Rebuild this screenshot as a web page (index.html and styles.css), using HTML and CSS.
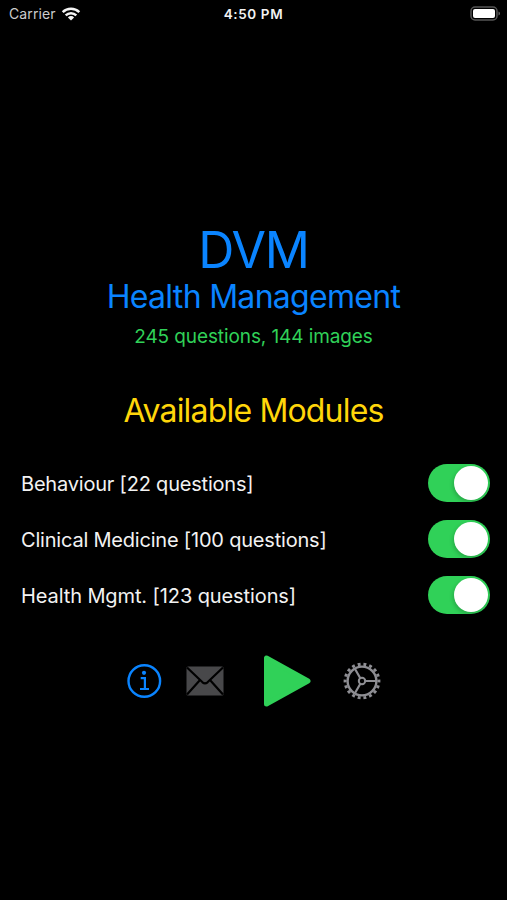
FILE: index.html
```html
<!DOCTYPE html>
<html lang="en">
<head>
  <meta charset="UTF-8" />
  <title>DVM Health Management</title>
  <meta name="viewport" content="width=device-width, initial-scale=1.0" />
  <link rel="stylesheet" href="styles.css">
</head>
<body>

<header class="status-bar">
  <div class="carrier">
    <span>Carrier</span>
    <svg class="wifi" viewBox="0 0 20 14">
      <path d="M1.7 5.2a12 12 0 0 1 16.6 0M4.7 8.3a7.6 7.6 0 0 1 10.6 0" fill="none" stroke="#f4f4f4" stroke-width="2.5" />
      <path d="M10 13.6 6.9 10.4a4.4 4.4 0 0 1 6.2 0z" fill="#f4f4f4" />
    </svg>
  </div>
  <div class="clock">4:50 PM</div>
  <svg class="battery" viewBox="0 0 31 16">
    <rect x="1" y="1" width="26" height="13" rx="4" fill="none" stroke="#555" stroke-width="1.5" />
    <rect x="3" y="3" width="22" height="9" rx="2" fill="#fff" />
    <path d="M28.5 5.5c2 .7 2 3.3 0 4z" fill="#666" />
  </svg>
</header>

<main>
  <h1 class="title">DVM</h1>
  <h2 class="subtitle">Health Management</h2>
  <p class="summary">245 questions, 144 images</p>
  <h2 class="modules-title">Available Modules</h2>

  <div class="modules">
    <label class="module">
      <span class="name">Behaviour [22 questions]</span>
      <input type="checkbox" class="toggle" checked />
    </label>
    <label class="module">
      <span class="name">Clinical Medicine [100 questions]</span>
      <input type="checkbox" class="toggle" checked />
    </label>
    <label class="module">
      <span class="name short">Health Mgmt. [123 questions]</span>
      <input type="checkbox" class="toggle" checked />
    </label>
  </div>

  <nav class="actions">
    <svg class="info" viewBox="0 0 36 36">
      <circle cx="18.3" cy="18" r="15.8" fill="none" stroke="#0a84ff" stroke-width="2.4" />
      <circle cx="18" cy="9.8" r="2.1" fill="#0a84ff" />
      <path d="M14.7 15.2h4.2v10.6M14 26h9" fill="none" stroke="#0a84ff" stroke-width="2.2" />
    </svg>
    <svg class="mail" viewBox="0 0 38 30">
      <rect x=".5" y=".5" width="37" height="29" rx="1.5" fill="#48484a" />
      <path d="M1 1.5 16.5 16.3q2.5 2.2 5 0L37 1.5M1 28.5l12.8-14.2M37 28.5 24.2 14.3" fill="none" stroke="#000" stroke-width="2.2" />
    </svg>
    <svg class="play" viewBox="0 0 48 54">
      <path d="M3.5 4v46L45 27z" fill="#30d158" stroke="#30d158" stroke-width="5" stroke-linejoin="round" />
    </svg>
    <svg class="gear" viewBox="0 0 38 38">
      <g fill="none" stroke="#8e8e93">
        <circle cx="19" cy="19" r="14.4" stroke-width="2.4" />
        <circle cx="19" cy="19" r="16.9" stroke-width="3" pathLength="72" stroke-dasharray="2 2" stroke-dashoffset="1" />
        <circle cx="19" cy="19" r="3.2" stroke-width="2" />
        <path d="M22.5 19h11M17.2 16l-5.6-9.7M17.2 22l-5.6 9.7" stroke-width="2.2" />
      </g>
    </svg>
  </nav>
</main>

</body>
</html>
```
FILE: styles.css
```css
* {
  box-sizing: border-box;
}

body {
  margin: 0;
  height: 900px;
  overflow: hidden;
  background: #000;
  color: #f2f2f2;
  font-family: Inter, "Liberation Sans", sans-serif;
}

h1, h2, p {
  margin: 0;
  font-weight: 400;
  text-align: center;
  white-space: nowrap;
}

.status-bar {
  display: grid;
  grid-template-columns: 1fr auto 1fr;
  align-items: center;
  height: 27px;
  padding: 0 6px 0 9px;
  font-size: 14px;
}

.carrier {
  display: flex;
  align-items: center;
  gap: 5px;
  color: #ccc;
  letter-spacing: 0.1px;
}

.wifi {
  width: 20px;
  height: 14px;
}

.clock {
  margin-right: 3px;
  font-size: 13.5px;
  font-weight: 600;
  letter-spacing: 0.6px;
}

.battery {
  width: 31px;
  height: 16px;
  justify-self: end;
}

.title {
  margin-top: 193px;
  font-size: 50px;
  line-height: 60px;
  letter-spacing: -1.2px;
  color: #0a84ff;
}

.subtitle {
  font-size: 32px;
  line-height: 34px;
  letter-spacing: -0.7px;
  color: #0a84ff;
}

.summary {
  margin-top: 11px;
  font-size: 19px;
  line-height: 24px;
  letter-spacing: -0.1px;
  color: #30d158;
}

.modules-title {
  margin-top: 42px;
  font-size: 32px;
  line-height: 40px;
  letter-spacing: -0.82px;
  color: #ffd60a;
}

.modules {
  margin-top: 24px;
  padding: 0 17px 0 21px;
}

.module {
  display: flex;
  align-items: center;
  justify-content: space-between;
  height: 56px;
}

.name {
  padding-top: 2px;
  font-size: 20px;
  letter-spacing: -0.2px;
  white-space: nowrap;
}

.name.short {
  letter-spacing: -0.1px;
}

.toggle {
  appearance: none;
  display: flex;
  justify-content: flex-end;
  width: 62.5px;
  height: 38px;
  margin: 0;
  padding: 2px;
  border-radius: 19px;
  background: #30d158;
}

.toggle::before {
  content: "";
  width: 34px;
  height: 34px;
  border-radius: 50%;
  background: #fff;
  box-shadow: -1px 2px 4px rgba(0, 0, 0, 0.2);
}

.toggle:not(:checked) {
  justify-content: flex-start;
  background: #39393d;
}

.actions {
  display: flex;
  align-items: center;
  justify-content: center;
  margin-top: 31px;
}

.info {
  width: 36px;
  height: 36px;
}

.mail {
  width: 38px;
  height: 30px;
  margin-left: 24px;
}

.play {
  width: 48px;
  height: 54px;
  margin-left: 39px;
}

.gear {
  width: 38px;
  height: 38px;
  margin-left: 32px;
}
```
